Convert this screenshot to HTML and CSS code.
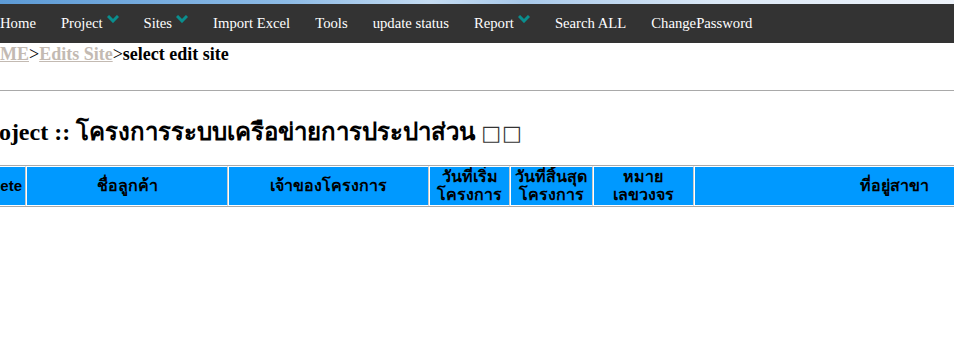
FILE: index.html
```html
<!DOCTYPE html>
<html lang="th">
<head>
    <meta charset="UTF-8">
    <title>select edit site</title>
    <link rel="stylesheet" href="styles.css">
</head>
<body>
    <div class="top-strip"></div>
    <ul class="menu">
        <li>Home</li>
        <li>Project <svg class="drop" viewBox="0 0 12 8"><polyline points="1,1 6,6 11,1"/></svg></li>
        <li>Sites <svg class="drop" viewBox="0 0 12 8"><polyline points="1,1 6,6 11,1"/></svg></li>
        <li>Import Excel</li>
        <li>Tools</li>
        <li>update status</li>
        <li>Report <svg class="drop" viewBox="0 0 12 8"><polyline points="1,1 6,6 11,1"/></svg></li>
        <li>Search ALL</li>
        <li>ChangePassword</li>
    </ul>

    <div class="page">
        <div class="crumbs">
            <a href="#">HOME</a>&gt;<a href="#">Edits Site</a>&gt;<b>select edit site</b>
        </div>
        <hr>
        <h2>Project :: โครงการระบบเครือข่ายการประปาส่วน<span class="tofu">□□</span></h2>

        <table class="sites">
            <colgroup>
                <col style="width:52px">
                <col style="width:202px">
                <col style="width:201px">
                <col style="width:81px">
                <col style="width:82px">
                <col style="width:101px">
                <col style="width:402px">
            </colgroup>
            <thead>
                <tr>
                    <th class="del">Delete</th>
                    <th>ชื่อลูกค้า</th>
                    <th>เจ้าของโครงการ</th>
                    <th>วันที่เริ่ม<br>โครงการ</th>
                    <th>วันที่สิ้นสุด<br>โครงการ</th>
                    <th>หมาย<br>เลขวงจร</th>
                    <th>ที่อยู่สาขา</th>
                </tr>
            </thead>
        </table>
    </div>
</body>
</html>
```

FILE: styles.css
```css
html, body {
    margin: 0;
    padding: 0;
    overflow: hidden;
}
body {
    font-family: "Liberation Serif", "Times New Roman", serif;
    background-color: white;
    color: black;
}
.top-strip {
    height: 4px;
    background: linear-gradient(90deg, #5d9bd6 0%, #8dbbe6 30%, #c5dcf2 45%, #a8c9ea 55%, #dbe8f6 75%, #eef3fa 100%);
}
.menu {
    list-style: none;
    margin: 0;
    padding: 0;
    height: 39px;
    background-color: #333333;
    display: flex;
    align-items: center;
    gap: 25px;
}
.menu li {
    color: white;
    font-size: 14.7px;
    display: flex;
    align-items: center;
    white-space: nowrap;
}
.drop {
    width: 12px;
    height: 8px;
    margin-left: 4px;
    margin-top: -10px;
}
.drop polyline {
    fill: none;
    stroke: #0a8e8e;
    stroke-width: 3;
}
.page {
    margin-left: -26px;
    width: 1150px;
}
.crumbs {
    font-size: 18px;
    line-height: 20px;
    margin: 1px 0 0 -2px;
}
.crumbs a {
    color: #c3bab2;
    font-weight: bold;
}
hr {
    margin: 26px 0 0 26px;
    border: none;
    border-top: 1px solid #a9a9a9;
    height: 0;
}
h2 {
    font-size: 24px;
    margin: 27px 0 18px 0;
    line-height: 28px;
}
.tofu {
    font-family: "DejaVu Sans", sans-serif;
    font-weight: normal;
    font-size: 21px;
    letter-spacing: 1px;
    margin-left: 6px;
    color: #333;
}
.sites {
    border-collapse: separate;
    border-spacing: 0;
    border-top: 1px solid #a9a9a9;
    border-bottom: 1px solid #a9a9a9;
    table-layout: fixed;
    width: 1122px;
}
.sites th {
    background-color: #0099ff;
    font-family: "Liberation Sans", Tahoma, sans-serif;
    font-size: 16px;
    line-height: 18px;
    height: 38px;
    padding: 0 2px;
    border-top: 1px solid white;
    border-bottom: 1px solid white;
    border-right: 1px solid #c8c8c8;
    border-left: 1px solid white;
    text-align: center;
    color: black;
    overflow: hidden;
}
.sites th.del {
    text-align: right;
    padding-right: 5px;
    font-size: 15px;
}
```
